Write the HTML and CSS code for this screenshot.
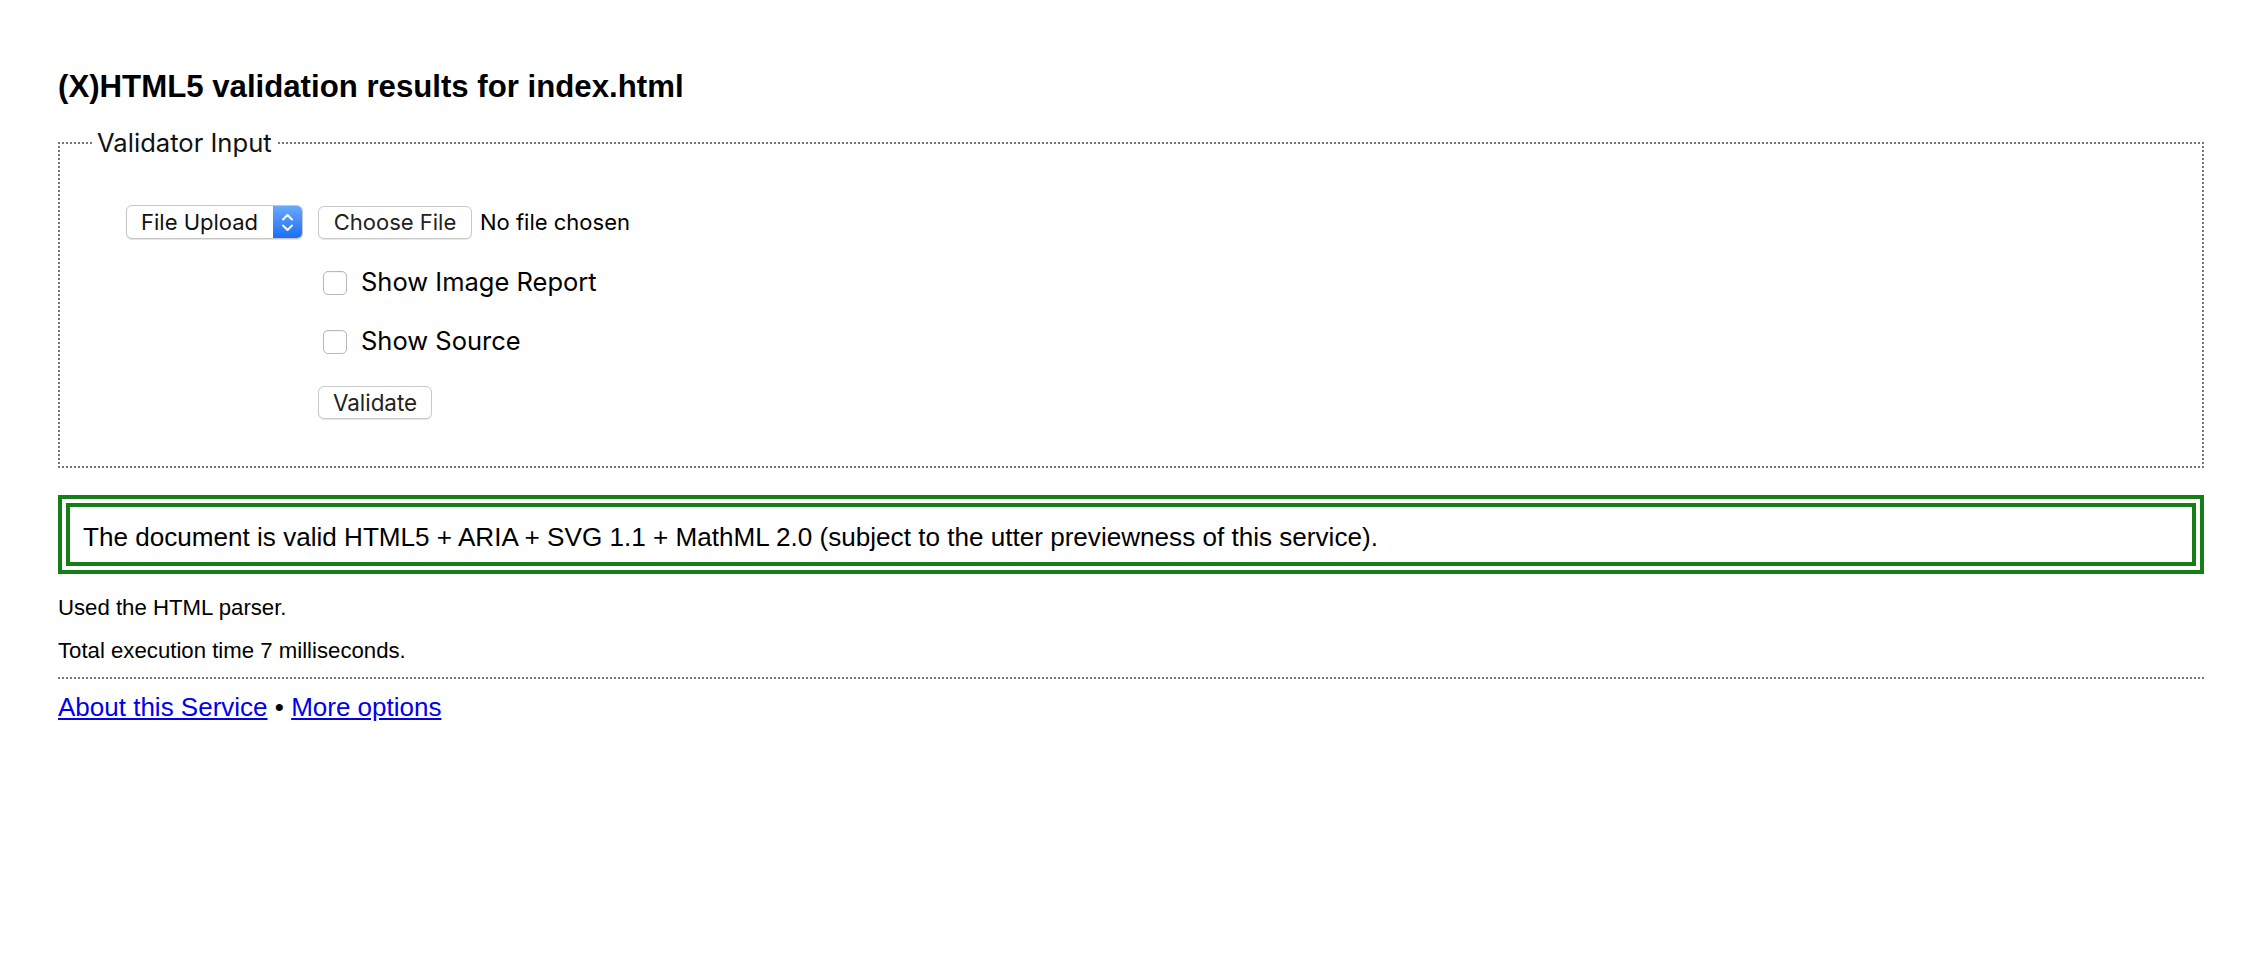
FILE: index.html
```html
<!DOCTYPE html>
<html lang="en">
<head>
<meta charset="utf-8">
<title>Validation results for index.html</title>
<link rel="stylesheet" href="styles.css">
</head>
<body>
<div class="page">
  <h2 class="title">(X)HTML5 validation results for index.html</h2>
  <fieldset class="input-box">
    <legend class="legend">Validator Input</legend>
    <div class="form-grid">
      <div class="select">
        <span class="select-label">File Upload</span>
        <span class="select-arrow">
          <svg width="29" height="32" viewBox="0 0 29 32" aria-hidden="true">
            <path d="M10 13.5 L14.5 9 L19 13.5" fill="none" stroke="#fff" stroke-width="2" stroke-linecap="round" stroke-linejoin="round"/>
            <path d="M10 19.5 L14.5 24 L19 19.5" fill="none" stroke="#fff" stroke-width="2" stroke-linecap="round" stroke-linejoin="round"/>
          </svg>
        </span>
      </div>
      <div class="file-row">
        <span class="btn btn-file">Choose File</span>
        <span class="file-note">No file chosen</span>
      </div>
      <div class="spacer"></div>
      <label class="check-row"><span class="checkbox"></span><span class="check-label">Show Image Report</span></label>
      <div class="spacer"></div>
      <label class="check-row"><span class="checkbox"></span><span class="check-label">Show Source</span></label>
      <div class="spacer"></div>
      <div class="submit-row"><span class="btn btn-validate">Validate</span></div>
    </div>
  </fieldset>
  <p class="success">The document is valid HTML5 + ARIA + SVG 1.1 + MathML 2.0 (subject to the utter previewness of this service).</p>
  <p class="details details-first">Used the HTML parser.</p>
  <p class="details details-second">Total execution time 7 milliseconds.</p>
  <hr class="rule">
  <p class="links"><a href="#">About this Service</a> • <a href="#">More options</a></p>
</div>
</body>
</html>
```

FILE: styles.css
```css
* { box-sizing: border-box; }

html, body {
  margin: 0;
  padding: 0;
  background: #fff;
}

body {
  font-family: "Liberation Sans", Arial, sans-serif;
  color: #000;
}

.page {
  padding: 69px 62px 40px 58px;
}

.title {
  margin: 0;
  font-size: 31.2px;
  line-height: 36px;
  font-weight: bold;
}

.input-box {
  margin: 23px 0 0;
  border: 2px dotted #777;
  padding: 0 0 47px 33px;
  min-width: 0;
}

.legend {
  padding: 0 4px;
  font-family: Inter, "Liberation Sans", sans-serif;
  font-size: 25.6px;
  line-height: 30px;
  color: #111;
}

.form-grid {
  margin: 47px 0 0 33px;
  display: grid;
  grid-template-columns: 177px auto;
  column-gap: 15px;
  row-gap: 29px;
  justify-content: start;
  align-items: center;
  font-family: Inter, "Liberation Sans", sans-serif;
  color: #111;
}

.select {
  display: flex;
  align-items: stretch;
  height: 34px;
  border: 1px solid #c6c6c6;
  border-radius: 6px;
  background: #fff;
  box-shadow: 0 1px 1px rgba(0, 0, 0, 0.12);
  overflow: hidden;
}

.select-label {
  flex: 1;
  display: flex;
  align-items: center;
  padding-left: 14px;
  font-size: 22px;
}

.select-arrow {
  width: 29px;
  display: flex;
  align-items: center;
  justify-content: center;
  background: linear-gradient(#6aa8fb, #1c6ef3);
}

.file-row {
  display: flex;
  align-items: center;
  gap: 8px;
}

.btn {
  display: inline-flex;
  align-items: center;
  justify-content: center;
  height: 33px;
  border: 1px solid #c9c9c9;
  border-radius: 6px;
  background: #fff;
  box-shadow: 0 1px 1px rgba(0, 0, 0, 0.1);
  font-size: 22px;
  color: #222;
}

.btn-file {
  width: 154px;
}

.btn-validate {
  width: 114px;
  font-size: 22.4px;
}

.file-note {
  font-size: 22px;
  color: #000;
}

.check-row {
  display: flex;
  align-items: center;
  gap: 14px;
  padding-left: 5px;
  height: 30px;
}

.checkbox {
  width: 24px;
  height: 24px;
  border: 1px solid #b8b8b8;
  border-radius: 5px;
  background: #fff;
  box-shadow: inset 0 1px 1px rgba(0, 0, 0, 0.05);
}

.check-label {
  font-size: 25.5px;
  color: #000;
  margin-bottom: 3px;
}

.submit-row {
  display: flex;
}

.success {
  margin: 27px 0 0;
  border: 12px double #137f16;
  padding: 15px 13px 10px;
  font-size: 26.1px;
  line-height: 30px;
}

.details {
  font-size: 22.2px;
  line-height: 25px;
  margin: 0;
}

.details-first {
  margin-top: 21px;
}

.details-second {
  margin-top: 18px;
}

.rule {
  margin: 14px 0 0;
  border: 0;
  border-top: 2px dotted #777;
  height: 0;
}

.links {
  margin: 13px 0 0;
  font-size: 26px;
  line-height: 30px;
}

.links a {
  color: #0000ee;
  text-decoration: underline;
}
```
